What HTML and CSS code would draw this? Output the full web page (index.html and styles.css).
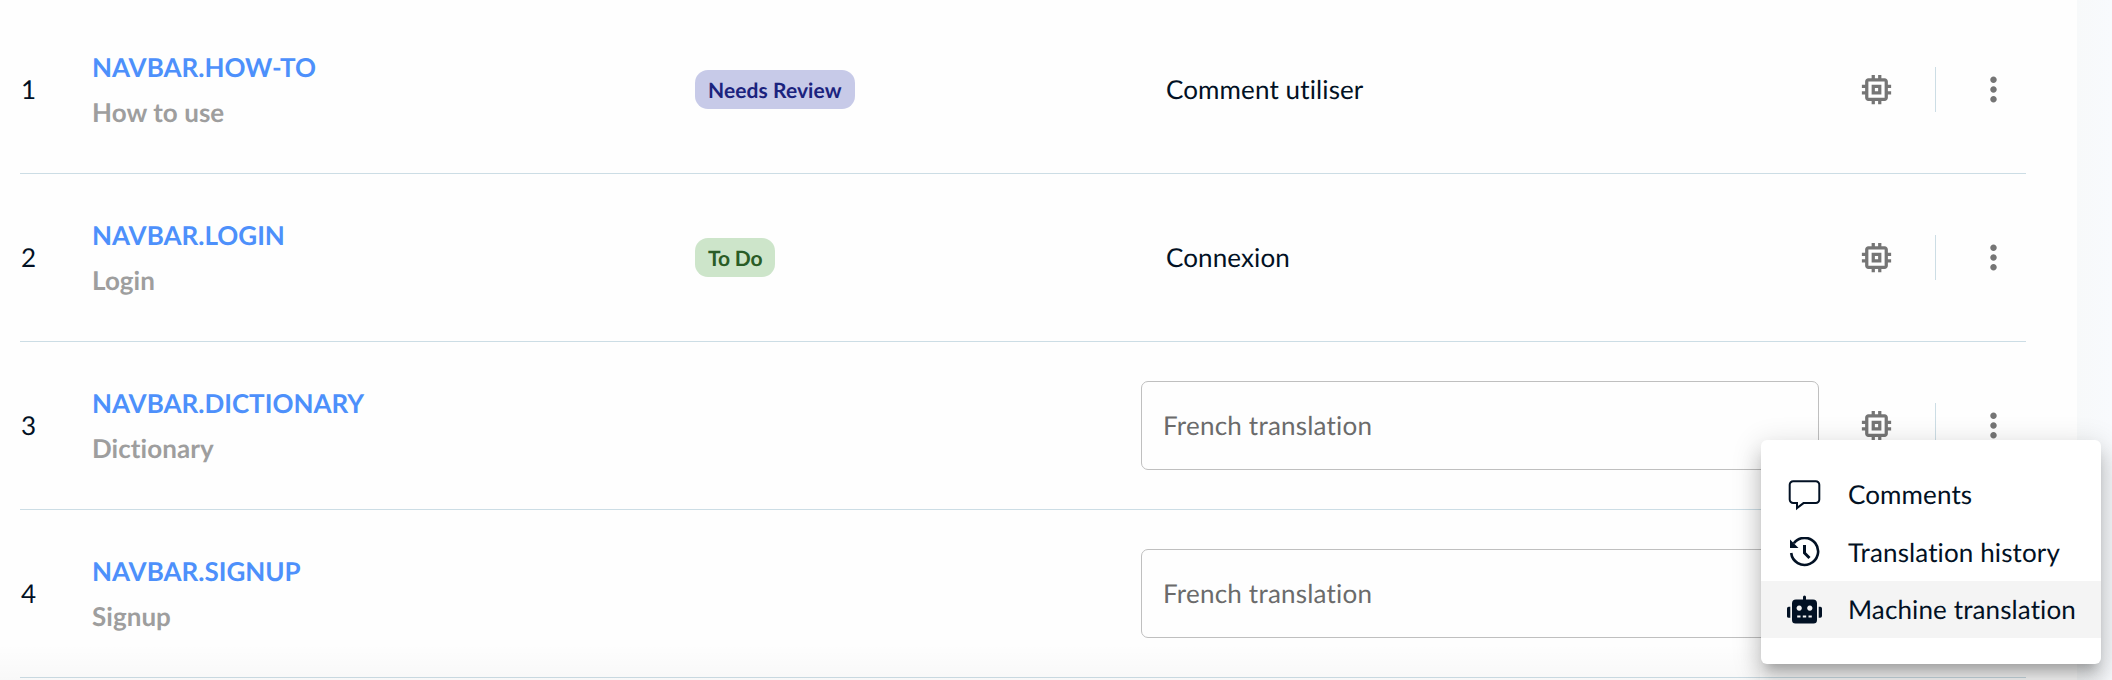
FILE: index.html
```html
<!DOCTYPE html>
<html lang="en">
<head>
<meta charset="utf-8">
<title>Translations</title>
<link rel="stylesheet" href="styles.css">
</head>
<body>
<svg class="sprite" aria-hidden="true">
  <symbol id="chip" viewBox="0 0 24 24"><path d="M15 9H9v6h6V9zm-2 4h-2v-2h2v2zm8-2V9h-2V7c0-1.1-.9-2-2-2h-2V3h-2v2h-2V3H9v2H7c-1.1 0-2 .9-2 2v2H3v2h2v2H3v2h2v2c0 1.1.9 2 2 2h2v2h2v-2h2v2h2v-2h2c1.1 0 2-.9 2-2v-2h2v-2h-2v-2h2zm-4 6H7V7h10v10z"/></symbol>
  <symbol id="more" viewBox="0 0 24 24"><path d="M12 8c1.1 0 2-.9 2-2s-.9-2-2-2-2 .9-2 2 .9 2 2 2zm0 2c-1.1 0-2 .9-2 2s.9 2 2 2 2-.9 2-2-.9-2-2-2zm0 6c-1.1 0-2 .9-2 2s.9 2 2 2 2-.9 2-2-.9-2-2-2z"/></symbol>
</svg>
<main class="panel">
  <div class="row">
    <div class="num">1</div>
    <div class="key"><a class="name">NAVBAR.HOW-TO</a><span class="source">How to use</span></div>
    <div class="status"><span class="badge review">Needs Review</span></div>
    <div class="value">Comment utiliser</div>
    <div class="actions"><svg class="icon"><use href="#chip"/></svg><i class="divider"></i><svg class="icon"><use href="#more"/></svg></div>
  </div>
  <div class="row">
    <div class="num">2</div>
    <div class="key"><a class="name">NAVBAR.LOGIN</a><span class="source">Login</span></div>
    <div class="status"><span class="badge todo">To Do</span></div>
    <div class="value">Connexion</div>
    <div class="actions"><svg class="icon"><use href="#chip"/></svg><i class="divider"></i><svg class="icon"><use href="#more"/></svg></div>
  </div>
  <div class="row">
    <div class="num">3</div>
    <div class="key"><a class="name">NAVBAR.DICTIONARY</a><span class="source">Dictionary</span></div>
    <div class="status"></div>
    <div class="field">French translation</div>
    <div class="actions"><svg class="icon"><use href="#chip"/></svg><i class="divider"></i><svg class="icon"><use href="#more"/></svg></div>
  </div>
  <div class="row">
    <div class="num">4</div>
    <div class="key"><a class="name">NAVBAR.SIGNUP</a><span class="source">Signup</span></div>
    <div class="status"></div>
    <div class="field">French translation</div>
    <div class="actions"><svg class="icon"><use href="#chip"/></svg><i class="divider"></i><svg class="icon"><use href="#more"/></svg></div>
  </div>
</main>
<div class="fade"></div>
<div class="menu">
  <div class="item">
    <svg class="glyph" viewBox="0 0 36 32"><path d="M6.200 1.300h22.600a3.500 3.500 0 0 1 3.500 3.500v14.800a3.500 3.500 0 0 1-3.500 3.500H16.500l-6.500 5v-5H6.200a3.500 3.500 0 0 1-3.500-3.500V4.800A3.500 3.500 0 0 1 6.200 1.300z" fill="none" stroke="currentColor" stroke-width="2"/></svg>
    <span>Comments</span>
  </div>
  <div class="item">
    <svg class="glyph" viewBox="0 0 36 32"><path d="M6.800 6.300A13.500 13.500 0 1 1 4.200 16" fill="none" stroke="currentColor" stroke-width="2.600"/><path d="M3 2.500V11h8.500z" fill="currentColor"/><path d="M17.500 8v8l5 5" fill="none" stroke="currentColor" stroke-width="3"/></svg>
    <span>Translation history</span>
  </div>
  <div class="item active">
    <svg class="glyph" viewBox="0 0 36 32"><path fill="currentColor" fill-rule="evenodd" d="M16 3a1.500 1.500 0 0 1 3 0v2.500h7a4 4 0 0 1 4 4V26a3.500 3.500 0 0 1-3.500 3.500h-18A3.500 3.500 0 0 1 5 26V9.500a4 4 0 0 1 4-4h7zM0 14.500a1.700 1.700 0 0 1 1.700-1.700H3.300v11H1.700A1.700 1.700 0 0 1 0 22zM31.700 12.800h1.600A1.700 1.700 0 0 1 35 14.500V22a1.700 1.700 0 0 1-1.700 1.700h-1.600zM12.200 11.500a2.600 2.600 0 1 0 .01 0zM22.800 11.500a2.600 2.600 0 1 0 .01 0zM10.200 21.500v2h3.300v-2zM15.800 21.500v2h3.400v-2zM21.500 21.500v2h3.300v-2z"/></svg>
    <span>Machine translation</span>
  </div>
</div>
</body>
</html>
```

FILE: styles.css
```css
* { box-sizing: border-box; }
body {
  margin: 0;
  height: 680px;
  overflow: hidden;
  position: relative;
  background: linear-gradient(90deg, #f7f9fa 2077px, #f8fafd 2112px);
  font-family: Lato, sans-serif;
  font-size: 26px;
  font-variant-ligatures: none;
  text-rendering: geometricPrecision;
  color: #021124;
}
.sprite { display: none; }
.panel {
  width: 2077px;
  height: 680px;
  padding: 6px 51px 0 20px;
  background: #fefefe;
}
.row {
  display: grid;
  grid-template-columns: 72px 603px 446px 678px 207px;
  align-items: center;
  height: 168px;
  border-bottom: 1px solid #ccdde5;
}
.num, .value { padding-bottom: 1px; }
.num { padding-left: 1px; }
.key { display: flex; flex-direction: column; gap: 6px; line-height: 39px; font-weight: 700; }
.name { color: #4d90fb; }
.source { color: #9e9e9e; letter-spacing: 0.05px; }
.badge {
  display: inline-block;
  height: 39px;
  padding: 0 13px;
  border-radius: 13px;
  font-size: 21px;
  line-height: 41px;
  font-weight: 700;
  vertical-align: middle;
}
.review { background: #c7cae8; color: #1b237e; letter-spacing: 0.08px; }
.todo { background: #cde5ca; color: #2a5c26; letter-spacing: -0.15px; }
.value { padding-left: 25px; letter-spacing: 0.12px; }
.field {
  height: 89px;
  padding-left: 21px;
  border: 1px solid #bfbfbf;
  border-radius: 7px;
  line-height: 87px;
  letter-spacing: 0.22px;
  color: #6b6b6b;
}
.actions { display: flex; align-items: center; padding-left: 38px; }
.icon { width: 39px; height: 39px; fill: #757575; }
.divider { width: 1px; height: 45px; margin: 0 38px 0 39px; background: #ccdde5; }
.fade {
  position: absolute;
  left: 0;
  width: 1760px;
  bottom: 0;
  height: 36px;
  background: linear-gradient(rgba(0,0,0,0), rgba(0,0,0,.025));
}
.menu {
  position: absolute;
  left: 1761px;
  top: 440px;
  width: 340px;
  height: 224px;
  padding-top: 27px;
  border-radius: 6px;
  background: #fff;
  box-shadow: 0 10px 10px -6px rgba(0,0,0,.2), 0 16px 20px 2px rgba(0,0,0,.14), 0 6px 28px 4px rgba(0,0,0,.12);
}
.item { display: flex; align-items: center; gap: 25px; height: 57px; padding-left: 26px; white-space: nowrap; letter-spacing: 0.12px; }
.item span { padding-bottom: 2px; }
.item:first-child span { padding-bottom: 3px; }
.item.active { background: #f4f4f4; }
.glyph { width: 36px; height: 32px; }
```
